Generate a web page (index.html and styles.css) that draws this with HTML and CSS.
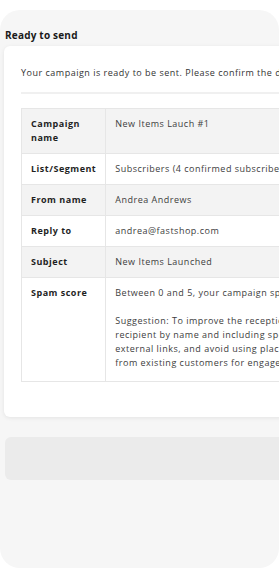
FILE: index.html
```html
<!DOCTYPE html>
<html lang="en">
<head>
    <meta charset="UTF-8">
    <meta name="viewport" content="width=device-width, initial-scale=1.0">
    <title>Ready to send</title>
    <link rel="stylesheet" href="styles.css">
</head>
<body>
    <div class="panel">
        <h2 class="panel-title">Ready to send</h2>

        <div class="card">
            <p class="intro">Your campaign is ready to be sent. Please confirm the details below before sending it to your list.</p>

            <table class="summary">
                <tr>
                    <th>Campaign name</th>
                    <td>New Items Lauch #1</td>
                </tr>
                <tr>
                    <th>List/Segment</th>
                    <td>Subscribers (4 confirmed subscribers)</td>
                </tr>
                <tr>
                    <th>From name</th>
                    <td>Andrea Andrews</td>
                </tr>
                <tr>
                    <th>Reply to</th>
                    <td>andrea@fastshop.com</td>
                </tr>
                <tr>
                    <th>Subject</th>
                    <td>New Items Launched</td>
                </tr>
                <tr>
                    <th>Spam score</th>
                    <td>
                        <p>Between 0 and 5, your campaign spam score is good.</p>
                        <p>Suggestion: To improve the reception of your campaign, try personalizing the email by addressing the<br>
                        recipient by name and including specific details. Keep the content relevant, limit the number of<br>
                        external links, and avoid using placeholder text. Consider sending a test to a small group<br>
                        from existing customers for engagement feedback first.</p>
                    </td>
                </tr>
            </table>
        </div>

        <div class="actions"></div>
    </div>
</body>
</html>
```

FILE: styles.css
```css
body {
    margin: 0;
    background-color: #ffffff;
    font-family: 'Open Sans', sans-serif;
    color: #333;
}
.panel {
    margin-top: 10px;
    width: 279px;
    height: 558px;
    background-color: #f6f6f6;
    border-radius: 20px;
    overflow: hidden;
    padding-top: 18px;
    box-sizing: border-box;
}
.panel-title {
    margin: 0 0 4px 5px;
    font-size: 10px;
    line-height: 14px;
    font-weight: 700;
    letter-spacing: 0.2px;
    color: #1a1a1a;
}
.card {
    margin-left: 4px;
    width: 700px;
    background-color: white;
    border-radius: 6px;
    box-shadow: 0 1px 4px rgba(0, 0, 0, 0.08);
    padding: 20px 17px 35px 17px;
    box-sizing: border-box;
}
.intro {
    margin: 0 0 14px 0;
    padding-bottom: 12px;
    border-bottom: 2px solid #f0f0f0;
    font-size: 9px;
    line-height: 14px;
    letter-spacing: 0.5px;
    color: #333;
    white-space: nowrap;
}
.summary {
    border-collapse: collapse;
    width: 100%;
    font-size: 9px;
    line-height: 14px;
    letter-spacing: 0.5px;
}
.summary th, .summary td {
    border: 1px solid #e6e6e6;
    padding: 8px 9px;
    vertical-align: top;
    text-align: left;
}
.summary th {
    width: 65px;
    font-weight: 700;
    color: #1f1f1f;
}
.summary td {
    color: #3d3d3d;
    white-space: nowrap;
}
.summary tr:nth-child(odd) {
    background-color: #f3f3f3;
}
.summary td p {
    margin: 0 0 14px 0;
}
.summary td p:last-child {
    margin-bottom: 3px;
}
.actions {
    margin: 20px 0 0 5px;
    width: 300px;
    height: 43px;
    background-color: #ebebeb;
    border-radius: 6px;
}
```
